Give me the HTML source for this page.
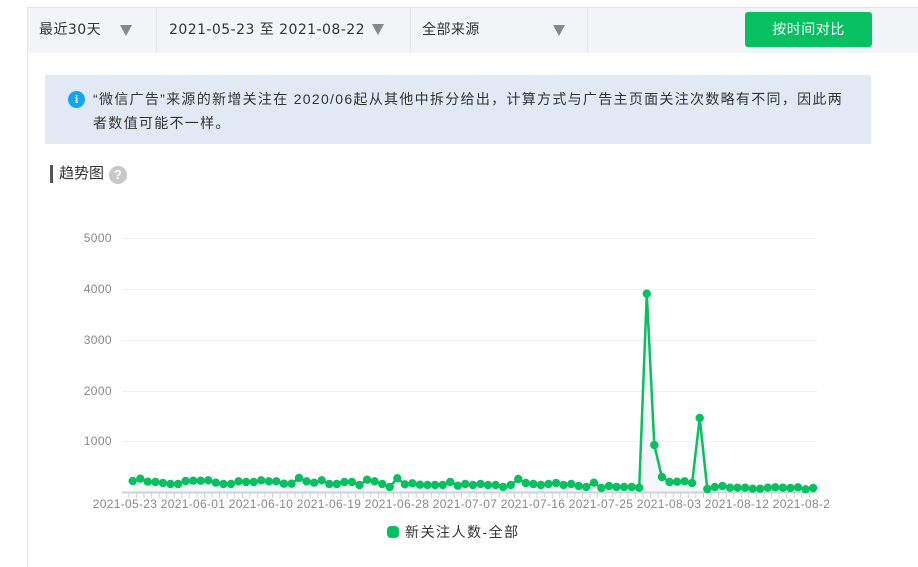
<!DOCTYPE html>
<html><head><meta charset="utf-8"><style>
*{margin:0;padding:0;box-sizing:border-box}
body{width:918px;height:560px;background:#fff;font-family:"Liberation Sans","Noto Sans CJK SC",sans-serif;color:#333;position:relative;overflow:hidden}
.panel{position:absolute;left:27px;top:7px;width:900px;height:560px;border-left:1px solid #e4e6eb;border-top:1px solid #e4e6eb}
.hdr{position:absolute;left:28px;top:8px;width:890px;height:45px;background:#f3f4f8}
.cell{position:absolute;top:8px;height:45px;line-height:45px;font-size:14px;color:#333;font-family:"DejaVu Sans","Noto Sans CJK SC",sans-serif;letter-spacing:0.45px}
.div{position:absolute;top:8px;width:1px;height:45px;background:#e1e3e8}
.tri{position:absolute;top:25px;width:0;height:0;border-left:6px solid transparent;border-right:6px solid transparent;border-top:11px solid #888}
.btn{position:absolute;left:745px;top:12px;width:127px;height:35px;background:#07c160;border-radius:3px;color:#fff;font-size:14px;text-align:center;line-height:35px;letter-spacing:0.5px}
.info{position:absolute;left:45px;top:75px;width:826px;height:69px;background:#e1e9f4;font-size:14px;line-height:24px;padding:12px 0 0 48px;color:#333;white-space:nowrap;letter-spacing:1.3px}
.ico{position:absolute;left:68px;top:91px;width:17px;height:17px;border-radius:50%;background:#10a6f0;color:#fff;font-size:12px;font-weight:bold;text-align:center;line-height:17px;font-family:"Liberation Serif",serif}
.ttl{position:absolute;left:50px;top:165px;font-size:15px;padding-left:6px;border-left:3px solid #555;height:18px;line-height:18px}
.q{position:absolute;left:109px;top:166px;width:18px;height:18px;border-radius:50%;background:#c8c8c8;color:#fff;font-size:13px;font-weight:bold;text-align:center;line-height:18px}
</style></head><body>
<div class="panel"></div>
<div class="hdr"></div>
<div class="cell" style="left:39px">最近30天</div>
<div class="tri" style="left:120px"></div>
<div class="div" style="left:156px"></div>
<div class="cell" style="left:169px">2021-05-23 至 2021-08-22</div>
<div class="tri" style="left:372px;top:24px"></div>
<div class="div" style="left:410px"></div>
<div class="cell" style="left:422px">全部来源</div>
<div class="tri" style="left:553px"></div>
<div class="div" style="left:587px"></div>
<div class="btn">按时间对比</div>
<div class="info">“微信广告”来源的新增关注在 2020/06起从其他中拆分给出，计算方式与广告主页面关注次数略有不同，因此两<br>者数值可能不一样。</div>
<div class="ico">i</div>
<div class="ttl">趋势图</div>
<div class="q">?</div>
<svg style="position:absolute;left:0;top:0" width="918" height="560">
<g stroke="#f0f0f0" stroke-width="1">
<line x1="122" y1="238.5" x2="817" y2="238.5"/><line x1="122" y1="289.5" x2="817" y2="289.5"/><line x1="122" y1="340.5" x2="817" y2="340.5"/><line x1="122" y1="391.5" x2="817" y2="391.5"/><line x1="122" y1="441.5" x2="817" y2="441.5"/>
</g>
<g font-size="12" fill="#888" text-anchor="end" font-family="Liberation Sans,sans-serif" letter-spacing="0.4">
<text x="112" y="242">5000</text><text x="112" y="293">4000</text><text x="112" y="344">3000</text><text x="112" y="395">2000</text><text x="112" y="445">1000</text>
</g>
<polygon fill="#f4f6fa" points="132.7,492 132.7,481 140.3,478.7 147.8,481.7 155.4,482 162.9,483 170.5,484 178.1,484 185.6,481 193.2,480.7 200.7,480.7 208.3,480.3 215.9,482.7 223.4,484 231,484 238.5,481.3 246.1,482 253.7,482 261.2,480.3 268.8,481.3 276.3,481.3 283.9,483.7 291.5,483.7 299,478 306.6,481.3 314.1,482.7 321.7,480.3 329.3,484 336.8,484 344.4,482 351.9,482 359.5,485 367.1,479.7 374.6,481.3 382.2,484 389.7,487 397.3,478.3 404.9,484.3 412.4,483.3 420,484.7 427.5,485 435.1,485 442.7,485 450.2,482 457.8,485.7 465.3,484 472.9,485 480.5,484 488,485 495.6,485 503.1,487 510.7,485 518.3,479 525.8,483 533.4,484 540.9,485 548.5,484 556.1,483 563.6,485 571.2,484 578.7,486 586.3,487 593.9,482.7 601.4,488 609,486 616.5,487 624.1,487 631.7,487 639.2,487.7 646.8,293.7 654.3,445 661.9,477 669.5,482 677,481.7 684.6,481.3 692.1,483 699.7,418 707.3,489 714.8,487 722.4,486 730,487.7 737.5,487.7 745.1,487.7 752.6,488.7 760.2,488.7 767.8,487.7 775.3,487.3 782.9,487.7 790.4,488 798,487.3 805.6,489.3 813.1,488 813.1,492"/>
<line x1="122" y1="492.5" x2="817" y2="492.5" stroke="#ccd3e0" stroke-width="2"/>
<g stroke="#ccd3e0" stroke-width="1" id="ticks"></g>
<polyline id="ln" fill="none" stroke="#07c160" stroke-width="2.5" stroke-linejoin="round" points="132.7,481 140.3,478.7 147.8,481.7 155.4,482 162.9,483 170.5,484 178.1,484 185.6,481 193.2,480.7 200.7,480.7 208.3,480.3 215.9,482.7 223.4,484 231,484 238.5,481.3 246.1,482 253.7,482 261.2,480.3 268.8,481.3 276.3,481.3 283.9,483.7 291.5,483.7 299,478 306.6,481.3 314.1,482.7 321.7,480.3 329.3,484 336.8,484 344.4,482 351.9,482 359.5,485 367.1,479.7 374.6,481.3 382.2,484 389.7,487 397.3,478.3 404.9,484.3 412.4,483.3 420,484.7 427.5,485 435.1,485 442.7,485 450.2,482 457.8,485.7 465.3,484 472.9,485 480.5,484 488,485 495.6,485 503.1,487 510.7,485 518.3,479 525.8,483 533.4,484 540.9,485 548.5,484 556.1,483 563.6,485 571.2,484 578.7,486 586.3,487 593.9,482.7 601.4,488 609,486 616.5,487 624.1,487 631.7,487 639.2,487.7 646.8,293.7 654.3,445 661.9,477 669.5,482 677,481.7 684.6,481.3 692.1,483 699.7,418 707.3,489 714.8,487 722.4,486 730,487.7 737.5,487.7 745.1,487.7 752.6,488.7 760.2,488.7 767.8,487.7 775.3,487.3 782.9,487.7 790.4,488 798,487.3 805.6,489.3 813.1,488"/>
<g id="dots" fill="#07c160"></g>
<g font-size="12" fill="#888" text-anchor="middle" font-family="Liberation Sans,sans-serif" letter-spacing="0.3">
<text x="125" y="508">2021-05-23</text><text x="193" y="508">2021-06-01</text><text x="261" y="508">2021-06-10</text><text x="329" y="508">2021-06-19</text><text x="397" y="508">2021-06-28</text><text x="465" y="508">2021-07-07</text><text x="533" y="508">2021-07-16</text><text x="601" y="508">2021-07-25</text><text x="669" y="508">2021-08-03</text><text x="737" y="508">2021-08-12</text><text x="805" y="508">2021-08-21</text>
</g>
<rect x="829" y="495" width="89" height="20" fill="#fff"/>
<rect x="387" y="526" width="12" height="12" rx="4" fill="#07c160"/>
<text x="405" y="537" font-size="14" fill="#333" letter-spacing="1.5" font-family="Liberation Sans,Noto Sans CJK SC,sans-serif">新关注人数-全部</text>
</svg>
<script>
var pts=document.getElementById('ln').getAttribute('points').trim().split(/\s+/);
var d=document.getElementById('dots'),t=document.getElementById('ticks'),ns='http://www.w3.org/2000/svg';
pts.forEach(function(p){var a=p.split(',');var c=document.createElementNS(ns,'circle');c.setAttribute('cx',a[0]);c.setAttribute('cy',a[1]);c.setAttribute('r','4.2');d.appendChild(c);
var l=document.createElementNS(ns,'line');var x=(+a[0]-3.8);l.setAttribute('x1',x);l.setAttribute('x2',x);l.setAttribute('y1',493);l.setAttribute('y2',498);t.appendChild(l);});
</script>
</body></html>
